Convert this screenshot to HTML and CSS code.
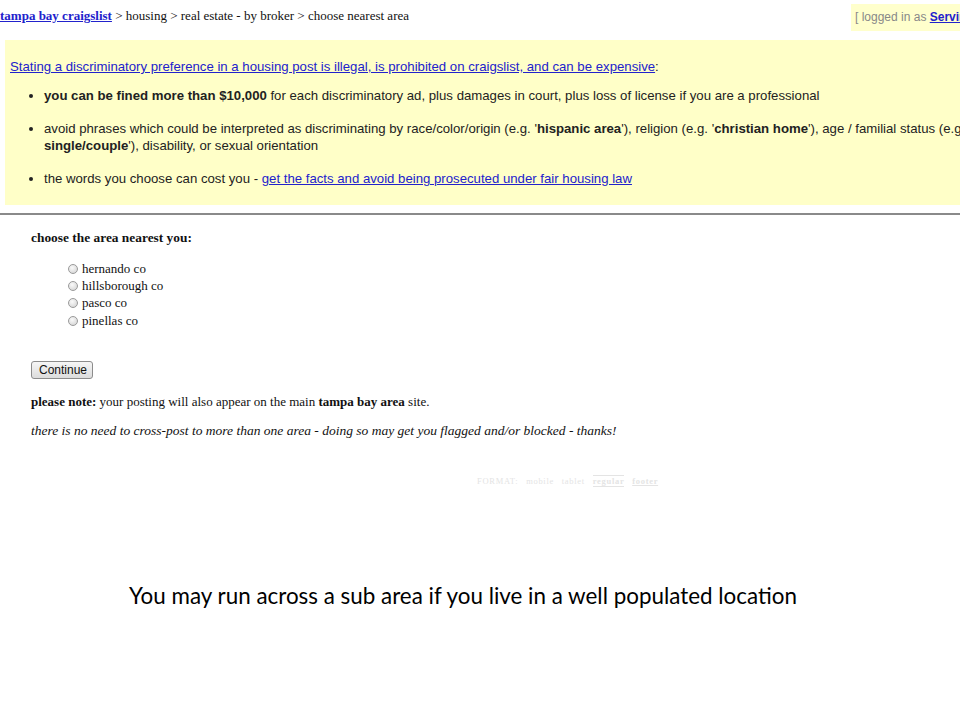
FILE: index.html
```html
<!DOCTYPE html>
<html lang="en">
<head>
  <title>choose nearest area</title>
  <link rel="stylesheet" href="styles.css">
</head>
<body>
  <div class="shot">
    <div class="topbar">
      <div class="crumbs">
        <a href="#" class="home">tampa bay craigslist</a> &gt; housing &gt; real estate - by broker &gt; choose nearest area
      </div>
      <div class="userbox">[ logged in as <a href="#">Serving Tampa</a> ]</div>
    </div>

    <div class="warning">
      <p class="lead"><a href="#">Stating a discriminatory preference in a housing post is illegal, is prohibited on craigslist, and can be expensive</a>:</p>
      <ul>
        <li><b>you can be fined more than $10,000</b> for each discriminatory ad, plus damages in court, plus loss of license if you are a professional</li>
        <li>avoid phrases which could be interpreted as discriminating by race/color/origin (e.g. '<b>hispanic area</b>'), religion (e.g. '<b>christian home</b>'), age / familial status (e.g. '<b>no kids</b>',<br><b>single/couple</b>'), disability, or sexual orientation</li>
        <li>the words you choose can cost you - <a href="#">get the facts and avoid being prosecuted under fair housing law</a></li>
      </ul>
    </div>

    <hr class="rule">

    <form class="picker">
      <h4>choose the area nearest you:</h4>
      <div class="areas">
        <label><input type="radio" name="area"> hernando co</label>
        <label><input type="radio" name="area"> hillsborough co</label>
        <label><input type="radio" name="area"> pasco co</label>
        <label><input type="radio" name="area"> pinellas co</label>
      </div>
      <button type="button" class="go">Continue</button>
      <p class="note"><b>please note:</b> your posting will also appear on the main <b>tampa bay area</b> site.</p>
      <p class="warn"><i>there is no need to cross-post to more than one area - doing so may get you flagged and/or blocked - thanks!</i></p>
    </form>

    <div class="format">
      <span>FORMAT:</span> <span>mobile</span> <span>tablet</span> <span class="current">regular</span> <span class="foot">footer</span>
    </div>
  </div>

  <p class="caption">You may run across a sub area if you live in a well populated location</p>
</body>
</html>
```

FILE: styles.css
```css
body {
  margin: 0;
  background-color: #fff;
  font-family: "Liberation Serif", "Times New Roman", serif;
  color: #111;
}
a {
  color: #2222cc;
}
.shot {
  width: 960px;
  height: 500px;
  overflow: hidden;
}
.topbar {
  display: flex;
  justify-content: space-between;
  align-items: flex-start;
  height: 40px;
  white-space: nowrap;
}
.crumbs {
  font-size: 13px;
  padding-top: 8px;
}
.crumbs .home {
  font-weight: bold;
}
.userbox {
  background-color: #ffffcc;
  font-family: "Liberation Sans", Arial, sans-serif;
  font-size: 12px;
  color: #888;
  padding: 6px 4px 7px 4px;
  margin-top: 4px;
  width: 101px;
  overflow: hidden;
}
.userbox a {
  font-weight: bold;
}
.warning {
  margin-left: 5px;
  width: 1100px;
  background-color: #ffffc8;
  font-family: "Liberation Sans", Arial, sans-serif;
  font-size: 13.2px;
  color: #222;
  padding: 18px 5px 12px 5px;
  box-sizing: border-box;
  height: 165px;
}
.warning .lead {
  margin: 0;
  line-height: 17px;
}
.warning ul {
  margin: 12px 0 0 0;
  padding-left: 34px;
}
.warning li {
  line-height: 17px;
  margin-bottom: 16px;
}
.rule {
  margin: 8px 0 0 0;
  border: none;
  border-top: 2px solid #8a8a8a;
}
.picker {
  padding-left: 31px;
  font-size: 13px;
}
.picker h4 {
  margin: 15px 0 0 0;
  font-size: 13.4px;
}
.areas {
  display: flex;
  flex-direction: column;
  margin: 14px 0 0 36px;
}
.areas label {
  display: flex;
  align-items: center;
  height: 17.3px;
}
.areas input {
  appearance: none;
  margin: 0 4px 0 1px;
  width: 10px;
  height: 10px;
  border-radius: 50%;
  border: 1px solid #9a9a9a;
  background: radial-gradient(circle at 40% 35%, #fafafa, #cfcfcf);
  box-sizing: border-box;
}
.go {
  margin-top: 32px;
  font-family: "Liberation Sans", Arial, sans-serif;
  font-size: 12px;
  padding: 0 7px;
  height: 18px;
  width: 62px;
  border: 1px solid #8c8c8c;
  border-radius: 3px;
  background: linear-gradient(#f6f6f6, #dcdcdc);
  color: #111;
}
.note {
  margin: 15px 0 0 0;
}
.warn {
  margin: 13px 0 0 0;
  font-size: 13.5px;
}
.format {
  margin: 37px 0 0 477px;
  font-family: "Liberation Serif", serif;
  font-size: 8.5px;
  color: #e4e4e4;
  letter-spacing: 0.7px;
}
.format span {
  margin-right: 5px;
}
.format .current {
  border-top: 1px solid #e4e4e4;
  border-bottom: 1px solid #e4e4e4;
  font-weight: bold;
}
.format .foot {
  text-decoration: underline;
  font-weight: bold;
}
.caption {
  margin: 82px 0 0 0;
  padding-right: 34px;
  text-align: center;
  font-family: Lato, "Open Sans", sans-serif;
  font-size: 22.4px;
  color: #000;
}
```
